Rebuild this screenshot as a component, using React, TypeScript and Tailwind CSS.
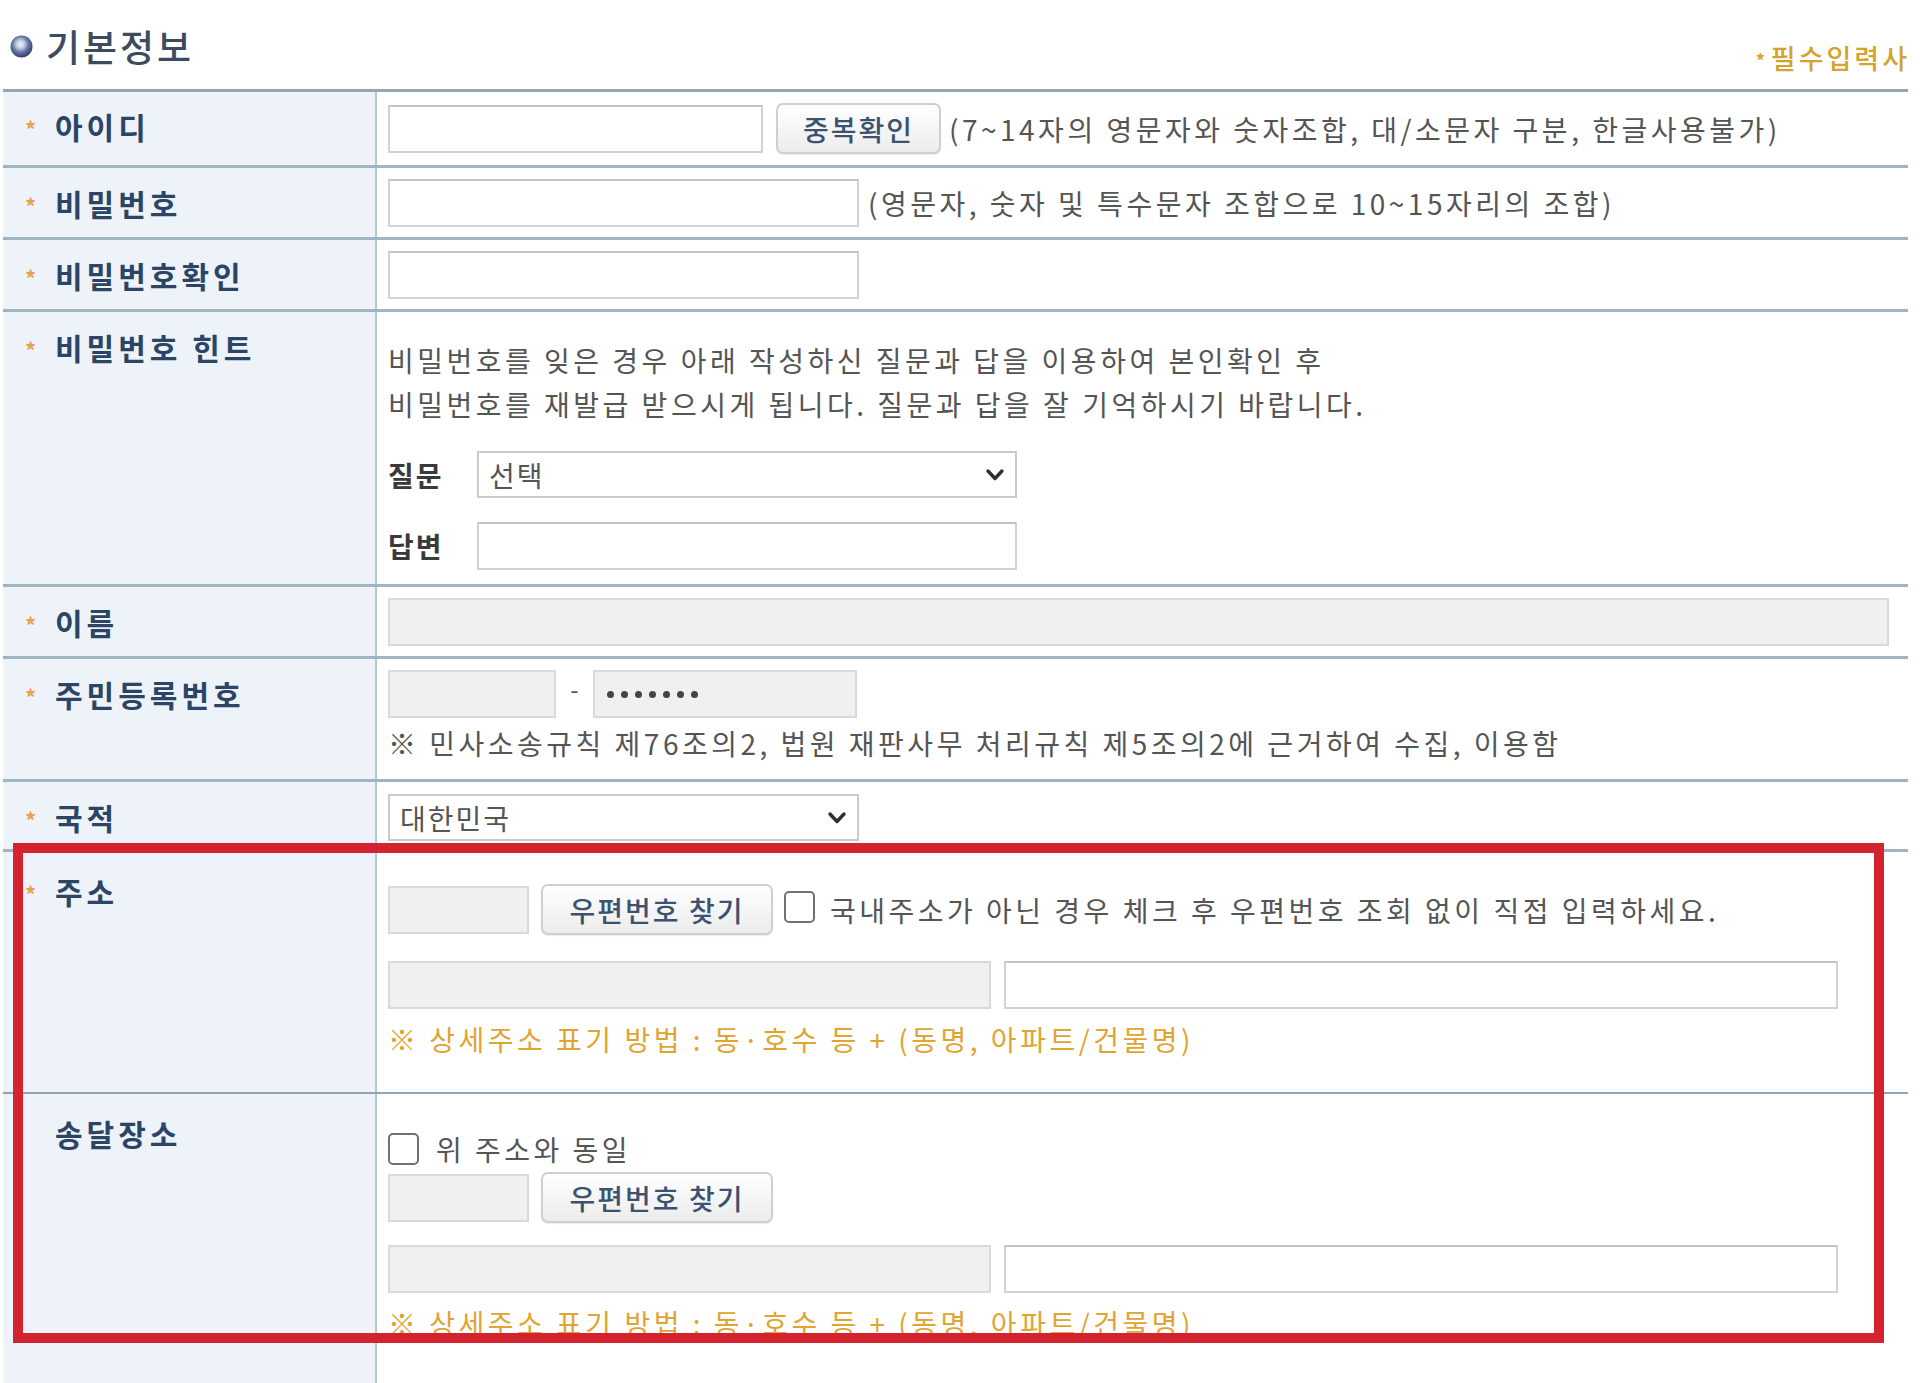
import React from "react";

const Star = () => (
  <span className="inline-block w-[10px] text-[22px] leading-none text-[#e7a24e] font-bold translate-y-[2px]">*</span>
);

const Label = ({ text, star = true, pt = "pt-[20px]" }: { text: string; star?: boolean; pt?: string }) => (
  <div className={`w-[374px] shrink-0 bg-[#edf3f9] border-r-2 border-[#b3c6d8] pl-[22px] ${pt}`}>
    <div className="flex items-center h-[32px]">
      <span className="w-[30px] flex items-center">{star ? <Star /> : null}</span>
      <span className="text-[30px] font-bold text-[#2c4566] tracking-[4px] leading-[32px]">{text}</span>
    </div>
  </div>
);

const Input = ({ w, gray = false, children }: { w: string; gray?: boolean; children?: React.ReactNode }) => (
  <div
    className={`${w} h-[48px] shrink-0 border-2 ${gray ? "bg-[#f0f0f0] border-[#d9d9d9]" : "bg-white border-[#d2d2d2] border-t-[#c4c4c4]"} flex items-center`}
  >
    {children}
  </div>
);

const Btn = ({ w, text }: { w: string; text: string }) => (
  <div
    className={`${w} h-[51px] shrink-0 rounded-[7px] border-2 border-[#cfcfcf] bg-gradient-to-b from-[#ffffff] to-[#ececec] flex items-center justify-center text-[28px] text-[#3b5370] font-medium tracking-[2px] shadow-[0_1px_1px_rgba(0,0,0,0.08)]`}
  >
    {text}
  </div>
);

const Chevron = () => (
  <svg width="20" height="14" viewBox="0 0 20 14" className="shrink-0">
    <polyline points="3,3 10,10.5 17,3" fill="none" stroke="#2f2f2f" strokeWidth="3.4" strokeLinecap="round" strokeLinejoin="round" />
  </svg>
);

const Select = ({ w, text }: { w: string; text: string }) => (
  <div className={`${w} h-[47px] shrink-0 border-2 border-[#cacaca] bg-white flex items-center justify-between pl-[10px] pr-[10px]`}>
    <span className="text-[28px] text-[#555] tracking-[2px] leading-none">{text}</span>
    <Chevron />
  </div>
);

const Check = () => <span className="inline-block w-[31px] h-[32px] shrink-0 rounded-[5px] border-2 border-[#717171] bg-white" />;

const txt = "text-[28px] text-[#555555] tracking-[3.5px] leading-[44px] whitespace-nowrap";
const note = "text-[28px] text-[#e0a431] tracking-[3.5px] leading-[44px] whitespace-nowrap";

export default function App() {
  return (
    <div className="relative w-[1920px] h-[1383px] overflow-hidden bg-white font-['Noto_Sans_CJK_KR','Noto_Sans_KR',sans-serif]">
      {/* header */}
      <div className="h-[89px] flex justify-between pl-[10px] pr-[10px]">
        <div className="flex items-center gap-[13px] h-[92px]">
          <svg width="23" height="23" viewBox="0 0 23 23">
            <defs>
              <radialGradient id="bl" cx="45%" cy="40%" r="60%">
                <stop offset="0%" stopColor="#f2f5fb" />
                <stop offset="30%" stopColor="#c5cde3" />
                <stop offset="60%" stopColor="#6878a6" />
                <stop offset="100%" stopColor="#2f3d6a" />
              </radialGradient>
            </defs>
            <circle cx="11.5" cy="11.5" r="11" fill="url(#bl)" />
          </svg>
          <span className="text-[37px] font-medium text-[#3c4c5e] tracking-[3px] leading-none">기본정보</span>
        </div>
        <div className="flex items-center h-[114px] gap-[6px]">
          <span className="text-[18px] text-[#d9a12e] font-bold translate-y-[3px]">*</span>
          <span className="text-[27px] font-medium text-[#d5a22e] tracking-[3px] leading-none">필수입력사</span>
        </div>
      </div>

      {/* table */}
      <div className="ml-[3px] w-[1905px] border-t-[3px] border-[#95a7b5] flex flex-col h-[1294px]">
        {/* 아이디 */}
        <div className="h-[76px] flex border-b-[3px] border-[#a2b3c1]">
          <Label text="아이디" pt="pt-[18px]" />
          <div className="flex-1 flex items-center pl-[11px]">
            <Input w="w-[375px]" />
            <div className="ml-[13px]">
              <Btn w="w-[165px]" text="중복확인" />
            </div>
            <span className={`ml-[8px] ${txt}`}>(7~14자의 영문자와 숫자조합, 대/소문자 구분, 한글사용불가)</span>
          </div>
        </div>
        {/* 비밀번호 */}
        <div className="h-[72px] flex border-b-[3px] border-[#a2b3c1]">
          <Label text="비밀번호" pt="pt-[19px]" />
          <div className="flex-1 flex items-center pl-[11px]">
            <Input w="w-[471px]" />
            <span className={`ml-[9px] ${txt}`}>(영문자, 숫자 및 특수문자 조합으로 10~15자리의 조합)</span>
          </div>
        </div>
        {/* 비밀번호확인 */}
        <div className="h-[72px] flex border-b-[3px] border-[#a2b3c1]">
          <Label text="비밀번호확인" pt="pt-[19px]" />
          <div className="flex-1 flex items-center pl-[11px]">
            <Input w="w-[471px]" />
          </div>
        </div>
        {/* 비밀번호 힌트 */}
        <div className="h-[275px] flex border-b-[3px] border-[#a2b3c1]">
          <Label text="비밀번호 힌트" pt="pt-[19px]" />
          <div className="flex-1 flex flex-col pl-[11px] pt-[26px]">
            <div className={txt}>비밀번호를 잊은 경우 아래 작성하신 질문과 답을 이용하여 본인확인 후</div>
            <div className={txt}>비밀번호를 재발급 받으시게 됩니다. 질문과 답을 잘 기억하시기 바랍니다.</div>
            <div className="flex items-center mt-[25px]">
              <span className="w-[89px] text-[28px] font-bold text-[#3a3a3a] tracking-[2px] leading-none">질문</span>
              <Select w="w-[540px]" text="선택" />
            </div>
            <div className="flex items-center mt-[24px]">
              <span className="w-[89px] text-[28px] font-bold text-[#3a3a3a] tracking-[2px] leading-none">답변</span>
              <Input w="w-[540px]" />
            </div>
          </div>
        </div>
        {/* 이름 */}
        <div className="h-[72px] flex border-b-[3px] border-[#a2b3c1]">
          <Label text="이름" pt="pt-[19px]" />
          <div className="flex-1 flex items-center pl-[11px]">
            <Input w="w-[1501px]" gray />
          </div>
        </div>
        {/* 주민등록번호 */}
        <div className="h-[123px] flex border-b-[3px] border-[#a2b3c1]">
          <Label text="주민등록번호" pt="pt-[19px]" />
          <div className="flex-1 flex flex-col pl-[11px] pt-[11px]">
            <div className="flex items-center">
              <Input w="w-[168px]" gray />
              <span className="w-[37px] text-center text-[24px] text-[#555] leading-none -translate-y-[5px]">-</span>
              <Input w="w-[264px]" gray>
                <span className="pl-[12px] flex gap-[7px]">
                  {[0, 1, 2, 3, 4, 5, 6].map((i) => (
                    <span key={i} className="w-[7px] h-[7px] rounded-full bg-[#444]" />
                  ))}
                </span>
              </Input>
            </div>
            <div className={`mt-[3px] ${txt}`}>※ 민사소송규칙 제76조의2, 법원 재판사무 처리규칙 제5조의2에 근거하여 수집, 이용함</div>
          </div>
        </div>
        {/* 국적 */}
        <div className="h-[70px] flex border-b-[3px] border-[#a2b3c1]">
          <Label text="국적" pt="pt-[19px]" />
          <div className="flex-1 flex items-start pl-[11px] pt-[12px]">
            <Select w="w-[471px]" text="대한민국" />
          </div>
        </div>
        {/* 주소 */}
        <div className="h-[242px] flex border-b-2 border-[#8fa4b6]">
          <Label text="주소" pt="pt-[23px]" />
          <div className="flex-1 flex flex-col pl-[11px] pt-[32px]">
            <div className="flex items-center">
              <Input w="w-[141px]" gray />
              <div className="ml-[12px]">
                <Btn w="w-[232px]" text="우편번호 찾기" />
              </div>
              <span className="ml-[11px]">
                <Check />
              </span>
              <span className={`ml-[15px] ${txt}`}>국내주소가 아닌 경우 체크 후 우편번호 조회 없이 직접 입력하세요.</span>
            </div>
            <div className="flex items-center mt-[26px] gap-[13px]">
              <Input w="w-[603px]" gray />
              <Input w="w-[834px]" />
            </div>
            <div className={`mt-[8px] ${note}`}>※ 상세주소 표기 방법 : 동·호수 등 + (동명, 아파트/건물명)</div>
          </div>
        </div>
        {/* 송달장소 */}
        <div className="flex-1 flex">
          <Label text="송달장소" star={false} pt="pt-[23px]" />
          <div className="flex-1 flex flex-col pl-[11px] pt-[33px]">
            <div className="flex items-center">
              <Check />
              <span className={`ml-[17px] ${txt}`}>위 주소와 동일</span>
            </div>
            <div className="flex items-center mt-[1px]">
              <Input w="w-[141px]" gray />
              <div className="ml-[12px]">
                <Btn w="w-[232px]" text="우편번호 찾기" />
              </div>
            </div>
            <div className="flex items-center mt-[22px] gap-[13px]">
              <Input w="w-[603px]" gray />
              <Input w="w-[834px]" />
            </div>
            <div className={`mt-[8px] ${note}`}>※ 상세주소 표기 방법 : 동·호수 등 + (동명, 아파트/건물명)</div>
          </div>
        </div>
      </div>

      {/* red highlight box */}
      <div className="absolute left-[13px] top-[843px] w-[1871px] h-[500px] border-[10px] border-[#d3232f] pointer-events-none" />
    </div>
  );
}
